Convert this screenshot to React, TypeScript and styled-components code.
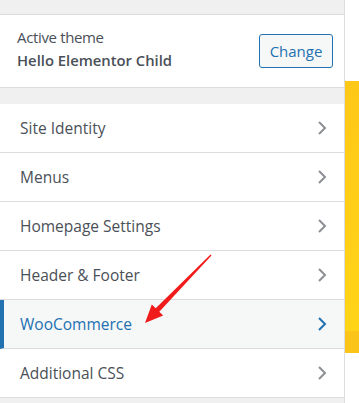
import React from "react";
import styled, { createGlobalStyle } from "styled-components";

const Global = createGlobalStyle`
  html, body { margin: 0; padding: 0; background: #fff; }
  body { font-family: "Open Sans", "Noto Sans", sans-serif; }
  * { box-sizing: border-box; }
`;

const Page = styled.div`
  position: relative;
  display: flex;
  width: 359px;
  height: 403px;
  overflow: hidden;
`;

const Panel = styled.div`
  width: 345px;
  flex: none;
  background: #f0f0f1;
  border-right: 1px solid #dcdcde;
  padding-top: 14px;
  display: flex;
  flex-direction: column;
`;

const ThemeInfo = styled.section`
  height: 74px;
  background: #fff;
  border-top: 1px solid #dcdcde;
  border-bottom: 1px solid #dcdcde;
  display: flex;
  align-items: center;
  justify-content: space-between;
  padding: 0 11px 0 17px;
`;

const ThemeText = styled.div`
  display: flex;
  flex-direction: column;
  color: #4a5057;
  font-size: 14.8px;
  line-height: 23px;
  margin-top: -5px;
`;

const ThemeLabel = styled.span`
  font-weight: 400;
  font-size: 15px;
  letter-spacing: -0.35px;
`;

const ThemeName = styled.span`
  font-weight: 600;
`;

const ChangeButton = styled.button`
  width: 74px;
  height: 34px;
  border: 1px solid #2271b1;
  border-radius: 3px;
  background: #f6f7f7;
  color: #2271b1;
  font-family: inherit;
  font-size: 15px;
  padding: 0;
  cursor: pointer;
`;

const Gap = styled.div`
  height: 16px;
  flex: none;
`;

const List = styled.ul`
  list-style: none;
  margin: 0;
  padding: 0;
`;

const Row = styled.li<{ $active?: boolean }>`
  height: 49px;
  display: flex;
  align-items: center;
  justify-content: space-between;
  background: ${(p) => (p.$active ? "#f6f7f7" : "#fff")};
  border-bottom: 1px solid #dcdcde;
  border-left: ${(p) => (p.$active ? "4px solid #2271b1" : "none")};
  padding: 0 17px 0 ${(p) => (p.$active ? "16px" : "20px")};
  color: ${(p) => (p.$active ? "#2271b1" : "#4a5057")};
  font-size: 15.5px;
`;

const RowTitle = styled.span`
  font-weight: 400;
  margin-top: -1px;
`;

const Chevron = styled.svg<{ $active?: boolean }>`
  width: 10px;
  height: 14px;
  color: ${(p) => (p.$active ? "#2271b1" : "#8c8f94")};
`;

const Preview = styled.div`
  flex: 1;
  background: #fff;
  padding-top: 81px;
`;

const YellowBar = styled.div`
  height: 272px;
  background: linear-gradient(#ffc817 0, #ffd417 92%, #fbc419 92%);
`;

const Arrow = styled.svg`
  position: absolute;
  left: 0;
  top: 0;
  width: 359px;
  height: 403px;
  pointer-events: none;
`;

const items = [
  "Site Identity",
  "Menus",
  "Homepage Settings",
  "Header & Footer",
  "WooCommerce",
  "Additional CSS",
];

export default function App() {
  return (
    <>
      <Global />
      <Page>
        <Panel>
          <ThemeInfo>
            <ThemeText>
              <ThemeLabel>Active theme</ThemeLabel>
              <ThemeName>Hello Elementor Child</ThemeName>
            </ThemeText>
            <ChangeButton>Change</ChangeButton>
          </ThemeInfo>
          <Gap />
          <List>
            {items.map((t) => {
              const active = t === "WooCommerce";
              return (
                <Row key={t} $active={active}>
                  <RowTitle>{t}</RowTitle>
                  <Chevron $active={active} viewBox="0 0 10 14">
                    <path d="M2 1 L8 7 L2 13" fill="none" stroke="currentColor" strokeWidth="2" />
                  </Chevron>
                </Row>
              );
            })}
          </List>
        </Panel>
        <Preview>
          <YellowBar />
        </Preview>
        <Arrow viewBox="0 0 359 403">
          <polygon
            points="210.5,254.6 211.5,255.6 159.3,311.7 163.2,315.6 145,323 151.8,304.4 155.7,308.3"
            fill="#f01c1c"
          />
        </Arrow>
      </Page>
    </>
  );
}
